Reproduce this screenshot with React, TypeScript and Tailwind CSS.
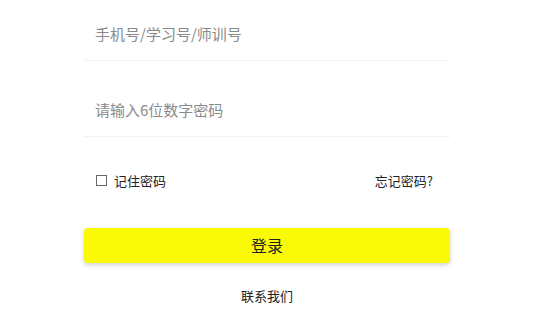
export default function App() {
  return (
    <main
      className="min-h-screen w-full bg-white"
      style={{ fontFamily: '"Noto Sans CJK SC", "Noto Sans", sans-serif' }}
    >
      <div className="ml-[84px] w-[366px] pt-[9px]">
        <div className="flex h-[52px] items-center border-b border-[#f2f2f2] pl-[11px] text-[15px] text-[#8a8a8a]">
          手机号/学习号/师训号
        </div>
        <div className="mt-[24px] flex h-[52px] items-center border-b border-[#f2f2f2] pl-[11px] text-[15px] text-[#8a8a8a]">
          请输入6位数字密码
        </div>

        <div className="mt-[34px] flex items-center justify-between pl-[12px] pr-[17px] text-[13px] text-[#222222]">
          <label className="flex items-center gap-[7px]">
            <span className="inline-block h-[11px] w-[11px] border border-[#666666] bg-white" />
            <span>记住密码</span>
          </label>
          <span>忘记密码?</span>
        </div>

        <button className="mt-[37px] flex h-[35px] w-full items-center justify-center rounded-[4px] bg-[#fafa07] text-[16px] text-[#222222] shadow-[0_2px_5px_rgba(0,0,0,0.18)]">
          登录
        </button>

        <div className="mt-[23px] text-center text-[13px] text-[#222222]">联系我们</div>
      </div>
    </main>
  );
}
